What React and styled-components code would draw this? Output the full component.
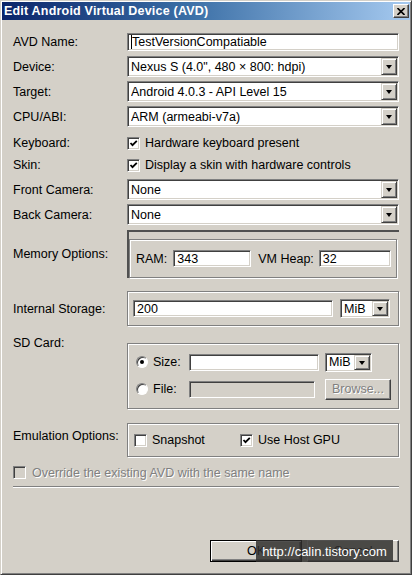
import React from "react"
import styled, { createGlobalStyle } from "styled-components"

const GlobalStyle = createGlobalStyle`
  html, body { margin:0; padding:0; background:#D4D0C8; }
  body { font-family:"Liberation Sans", Arial, sans-serif; font-size:12.5px; color:#000; }
  * { box-sizing:border-box; }
`

const Window = styled.div`
  position:relative;
  width:412px;
  height:575px;
  background:#D4D0C8;
  border:1px solid;
  border-color:#D4D0C8 #404040 #404040 #D4D0C8;
  box-shadow:inset 1px 1px #fff, inset -1px -1px #808080;
  padding:1px;
  display:flex;
  flex-direction:column;
`

const TitleBar = styled.div`
  height:18px;
  display:flex;
  align-items:center;
  justify-content:space-between;
  padding:0 1px 0 2px;
  background:linear-gradient(to right, #0A246A 0%, #3A6EA5 45%, #A6CAF0 100%);
  color:#fff;
  font-weight:bold;
  font-size:12.5px;
  letter-spacing:0.2px;
`

const CloseButton = styled.div`
  width:16px;
  height:14px;
  background:#D4D0C8;
  border:1px solid;
  border-color:#fff #404040 #404040 #fff;
  box-shadow:inset -1px -1px #808080;
  display:flex;
  align-items:center;
  justify-content:center;
`

const Form = styled.div`
  display:flex;
  flex-direction:column;
  padding:0 11px;
`

const Row = styled.div`
  display:flex;
  align-items:${p => p.$align || "center"};
  margin-top:${p => p.$mt || 0}px;
  height:${p => p.$h}px;
`

const Label = styled.div`
  width:114px;
  flex-shrink:0;
  line-height:16px;
  padding-top:${p => p.$pt || 0}px;
`

const Sunken = styled.div`
  display:flex;
  align-items:center;
  flex:${p => p.$w ? "none" : 1};
  width:${p => p.$w ? `${p.$w}px` : "auto"};
  min-width:0;
  height:${p => p.$h || 18}px;
  background:${p => p.$disabled ? "#D4D0C8" : "#fff"};
  border:1px solid;
  border-color:#808080 #fff #fff #808080;
  box-shadow:inset 1px 1px #404040, inset -1px -1px #D4D0C8;
  padding-left:3px;
  white-space:nowrap;
  overflow:hidden;
`

const Caret = styled.span`
  display:inline-block;
  width:1px;
  height:14px;
  background:#000;
`

const ComboBox = styled(Sunken)`
  padding-right:1px;
  justify-content:space-between;
`

const ComboText = styled.span`
  flex:1;
  overflow:hidden;
`

const ComboButton = styled.div`
  width:16px;
  height:${p => p.$h}px;
  flex-shrink:0;
  background:#D4D0C8;
  border:1px solid;
  border-color:#D4D0C8 #404040 #404040 #D4D0C8;
  box-shadow:inset 1px 1px #fff, inset -1px -1px #808080;
  display:flex;
  align-items:center;
  justify-content:center;
  &::after {
    content:"";
    border-left:3.5px solid transparent;
    border-right:3.5px solid transparent;
    border-top:4px solid #000;
    margin-top:1px;
  }
`

const CheckItem = styled.label`
  display:flex;
  align-items:center;
  width:${p => p.$w ? `${p.$w}px` : "auto"};
  color:${p => p.$disabled ? "#808080" : "#000"};
  text-shadow:${p => p.$disabled ? "1px 1px #fff" : "none"};
`

const CheckBox = styled.span`
  width:13px;
  height:13px;
  flex-shrink:0;
  margin-right:${p => p.$gap || 5}px;
  background:${p => p.$disabled ? "#D4D0C8" : "#fff"};
  border:1px solid;
  border-color:#808080 #fff #fff #808080;
  box-shadow:inset 1px 1px #404040, inset -1px -1px #D4D0C8;
  display:flex;
  align-items:center;
  justify-content:center;
`

const Radio = styled.span`
  width:12px;
  height:12px;
  flex-shrink:0;
  margin-right:5px;
  border-radius:50%;
  background:#fff;
  border:1px solid;
  border-color:#808080 #fff #fff #808080;
  box-shadow:inset 1px 1px #404040;
  display:flex;
  align-items:center;
  justify-content:center;
  &::after {
    content:"";
    width:4px;
    height:4px;
    border-radius:50%;
    background:${p => p.$checked ? "#000" : "transparent"};
  }
`

const GroupBox = styled.div`
  flex:1;
  min-width:0;
  height:${p => p.$h}px;
  border:1px solid #808080;
  box-shadow:inset 1px 1px #fff, 1px 1px #fff;
  display:flex;
  flex-direction:${p => p.$column ? "column" : "row"};
  justify-content:${p => p.$column ? "center" : "flex-start"};
  align-items:${p => p.$column ? "stretch" : "center"};
  gap:${p => p.$gap || 0}px;
  padding:${p => p.$pad || "0 6px"};
  margin-top:${p => p.$mt || 0}px;
`

const MemoryFrame = styled.div`
  flex:1;
  height:48px;
  display:flex;
  border-top:2px solid #505050;
  border-left:2px solid #505050;
  padding:7px 2px 0 0;
`

const FieldRow = styled.div`
  display:flex;
  align-items:center;
`

const FieldLabel = styled.span`
  margin-left:${p => p.$ml || 0}px;
  margin-right:${p => p.$mr || 5}px;
  flex-shrink:0;
`

const Gap = styled.span`
  width:${p => p.$w}px;
  flex-shrink:0;
`

const RadioLabel = styled.div`
  display:flex;
  align-items:center;
  width:53px;
  flex-shrink:0;
`

const Button = styled.div`
  width:${p => p.$w}px;
  height:${p => p.$h}px;
  flex-shrink:0;
  display:flex;
  align-items:center;
  justify-content:center;
  background:#D4D0C8;
  border:1px solid;
  border-color:${p => p.$default ? "#000" : "#fff #404040 #404040 #fff"};
  box-shadow:${p => p.$default
    ? "inset 1px 1px #fff, inset -1px -1px #404040, inset -2px -2px #808080"
    : "inset -1px -1px #808080"};
  color:${p => p.$disabled ? "#808080" : "#000"};
  text-shadow:${p => p.$disabled ? "1px 1px #fff" : "none"};
`

const Separator = styled.div`
  margin-top:7px;
  height:2px;
  border-top:1px solid #808080;
  border-bottom:1px solid #fff;
`

const ButtonBar = styled.div`
  position:relative;
  display:flex;
  justify-content:flex-end;
  gap:5px;
  margin-top:52px;
`

const Watermark = styled.div`
  position:absolute;
  right:6px;
  top:0;
  width:137px;
  height:22px;
  background:rgba(48,47,45,0.84);
  color:#fff;
  font-size:13px;
  display:flex;
  align-items:center;
  justify-content:center;
`

const Check = () => (
  <svg width="9" height="9" viewBox="0 0 9 9">
    <polyline points="1.5,4 3.5,6.2 7.8,1.8" fill="none" stroke="#000" strokeWidth="1.8" />
  </svg>
)

const CloseGlyph = () => (
  <svg width="8" height="7" viewBox="0 0 8 7">
    <path d="M0.5 0 L7.5 7 M7.5 0 L0.5 7" stroke="#000" strokeWidth="1.6" />
  </svg>
)

const Combo = ({ value, w, h = 21 }) => (
  <ComboBox $w={w} $h={h}>
    <ComboText>{value}</ComboText>
    <ComboButton $h={h - 4} />
  </ComboBox>
)

export default function App() {
  return (
    <Window>
      <GlobalStyle />
      <TitleBar>
        <span>Edit Android Virtual Device (AVD)</span>
        <CloseButton><CloseGlyph /></CloseButton>
      </TitleBar>
      <Form>
        <Row $mt={13} $h={18}>
          <Label>AVD Name:</Label>
          <Sunken $h={18}><Caret />TestVersionCompatiable</Sunken>
        </Row>
        <Row $mt={5} $h={21}>
          <Label>Device:</Label>
          <Combo value={'Nexus S (4.0", 480 × 800: hdpi)'} />
        </Row>
        <Row $mt={4} $h={21}>
          <Label>Target:</Label>
          <Combo value="Android 4.0.3 - API Level 15" />
        </Row>
        <Row $mt={4} $h={21}>
          <Label>CPU/ABI:</Label>
          <Combo value="ARM (armeabi-v7a)" />
        </Row>
        <Row $mt={5} $h={22}>
          <Label>Keyboard:</Label>
          <CheckItem><CheckBox><Check /></CheckBox>Hardware keyboard present</CheckItem>
        </Row>
        <Row $h={22}>
          <Label>Skin:</Label>
          <CheckItem><CheckBox><Check /></CheckBox>Display a skin with hardware controls</CheckItem>
        </Row>
        <Row $mt={3} $h={21}>
          <Label>Front Camera:</Label>
          <Combo value="None" />
        </Row>
        <Row $mt={4} $h={21}>
          <Label>Back Camera:</Label>
          <Combo value="None" />
        </Row>
        <Row $mt={5} $h={48}>
          <Label>Memory Options:</Label>
          <MemoryFrame>
            <GroupBox $h={39} $pad="0 6px">
              <FieldLabel $mr={6}>RAM:</FieldLabel>
              <Sunken $w={78} $h={17}>343</Sunken>
              <FieldLabel $ml={7}>VM Heap:</FieldLabel>
              <Sunken $w={72} $h={17}>32</Sunken>
            </GroupBox>
          </MemoryFrame>
        </Row>
        <Row $mt={13} $h={35}>
          <Label>Internal Storage:</Label>
          <GroupBox $h={35} $pad="0 5px">
            <Sunken $w={200} $h={17}>200</Sunken>
            <Gap $w={7} />
            <Combo value="MiB" w={50} h={19} />
          </GroupBox>
        </Row>
        <Row $mt={9} $h={74} $align="flex-start">
          <Label>SD Card:</Label>
          <GroupBox $h={66} $mt={8} $column $gap={7} $pad="0 7px 0 8px">
            <FieldRow>
              <RadioLabel><Radio $checked />Size:</RadioLabel>
              <Sunken $w={130} $h={17} />
              <Gap $w={6} />
              <Combo value="MiB" w={47} h={19} />
            </FieldRow>
            <FieldRow>
              <RadioLabel><Radio />File:</RadioLabel>
              <Sunken $w={126} $h={17} $disabled />
              <Gap $w={10} />
              <Button $w={66} $h={21} $disabled>Browse...</Button>
            </FieldRow>
          </GroupBox>
        </Row>
        <Row $mt={14} $h={34} $align="flex-start">
          <Label $pt={5}>Emulation Options:</Label>
          <GroupBox $h={34} $pad="0 6px">
            <CheckItem $w={106}><CheckBox />Snapshot</CheckItem>
            <CheckItem><CheckBox><Check /></CheckBox>Use Host GPU</CheckItem>
          </GroupBox>
        </Row>
        <Row $mt={9} $h={13}>
          <CheckItem $disabled><CheckBox $disabled $gap={6} />Override the existing AVD with the same name</CheckItem>
        </Row>
        <Separator />
        <ButtonBar>
          <Button $w={92} $h={22} $default>OK</Button>
          <Button $w={92} $h={22}>Cancel</Button>
          <Watermark>http://calin.tistory.com</Watermark>
        </ButtonBar>
      </Form>
    </Window>
  )
}
